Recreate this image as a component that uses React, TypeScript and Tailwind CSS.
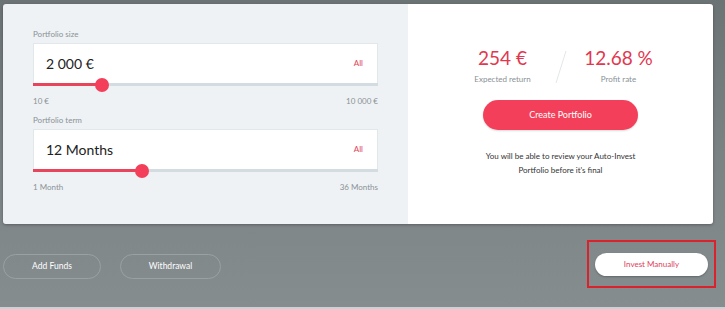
import React from "react";

const font = { fontFamily: "Lato, 'Open Sans', sans-serif" };

type SliderProps = {
  label: string;
  value: string;
  min: string;
  max: string;
  pct: number;
};

const SliderField = ({ label, value, min, max, pct }: SliderProps) => (
  <div className="flex flex-col">
    <span className="text-[8px] leading-[10px] text-[#8a9196] mb-[4px]">{label}</span>
    <div className="relative bg-white border border-[#e1e7eb] h-[42px] flex items-center justify-between pl-[12px] pr-[14px] pb-[2px]">
      <span className="text-[14px] text-[#222]">{value}</span>
      <span className="text-[8px] text-[#e0405a]">All</span>
      <div className="absolute left-[-1px] right-[-1px] bottom-[-2px] h-[3px] bg-[#d3dce1]">
        <div className="h-full bg-[#e8455c]" style={{ width: `${pct}%` }} />
        <div
          className="absolute top-1/2 w-[14px] h-[14px] -mt-[7px] -ml-[7px] rounded-full bg-[#f43f5a]"
          style={{ left: `${pct}%` }}
        />
      </div>
    </div>
    <div className="flex justify-between text-[8px] text-[#8a9196] mt-[11px] leading-[10px]">
      <span>{min}</span>
      <span>{max}</span>
    </div>
  </div>
);

const Stat = ({ value, label }: { value: string; label: string }) => (
  <div className="flex flex-col items-center w-[100px]">
    <span className="text-[19px] leading-[22px] text-[#e2374f]">{value}</span>
    <span className="text-[8px] text-[#8a9196] mt-[4px]">{label}</span>
  </div>
);

const PillOutline = ({ children, w }: { children: React.ReactNode; w: string }) => (
  <button className={`${w} h-[25px] rounded-full border border-[#9aa1a3] text-white text-[8.5px] flex items-center justify-center`}>
    {children}
  </button>
);

export default function App() {
  return (
    <div
      className="w-[725px] h-[309px] overflow-hidden flex flex-col bg-gradient-to-b from-[#6c7375] via-[#7b8284] to-[#868d8f]"
      style={font}
    >
      <div className="flex-1 flex flex-col pt-[4px] pl-[3px]">
        <div className="w-[710px] h-[220px] flex rounded-[3px] overflow-hidden shadow-[0_1px_3px_rgba(0,0,0,0.3)]">
          <div className="w-[405px] bg-[#eef2f4] pl-[30px] pr-[30px] pt-[25px] flex flex-col gap-[9px]">
            <SliderField label="Portfolio size" value="2 000 €" min="10 €" max="10 000 €" pct={20} />
            <SliderField label="Portfolio term" value="12 Months" min="1 Month" max="36 Months" pct={31.5} />
          </div>
          <div className="flex-1 bg-white flex flex-col items-center pt-[43px]">
            <div className="flex items-start">
              <Stat value="254 €" label="Expected return" />
              <svg width="14" height="34" className="mx-[1px] mt-[3px]">
                <line x1="12" y1="1" x2="2" y2="33" stroke="#e3e6e8" strokeWidth="1" />
              </svg>
              <Stat value="12.68 %" label="Profit rate" />
            </div>
            <button className="mt-[15px] w-[155px] h-[30px] rounded-full bg-[#f43f5a] text-white text-[9px] shadow-[0_1px_2px_rgba(0,0,0,0.15)]">
              Create Portfolio
            </button>
            <p className="mt-[19px] text-[8px] leading-[14px] text-[#333] text-center">
              You will be able to review your Auto-Invest
              <br />
              Portfolio before it's final
            </p>
          </div>
        </div>
        <div className="flex items-center mt-[16px] pr-[9px]">
          <div className="flex gap-[19px] mt-[4px]">
            <PillOutline w="w-[98px]">Add Funds</PillOutline>
            <PillOutline w="w-[101px]">Withdrawal</PillOutline>
          </div>
          <div className="ml-auto w-[129px] h-[48px] border-2 border-[#d9222b] flex items-center justify-center">
            <button className="w-[113px] h-[23px] rounded-full bg-white text-[#e0405a] text-[8px] shadow-[0_1px_2px_rgba(0,0,0,0.25)]">
              Invest Manually
            </button>
          </div>
        </div>
      </div>
      <div className="h-[2px] bg-[#c9d3d7]" />
    </div>
  );
}
